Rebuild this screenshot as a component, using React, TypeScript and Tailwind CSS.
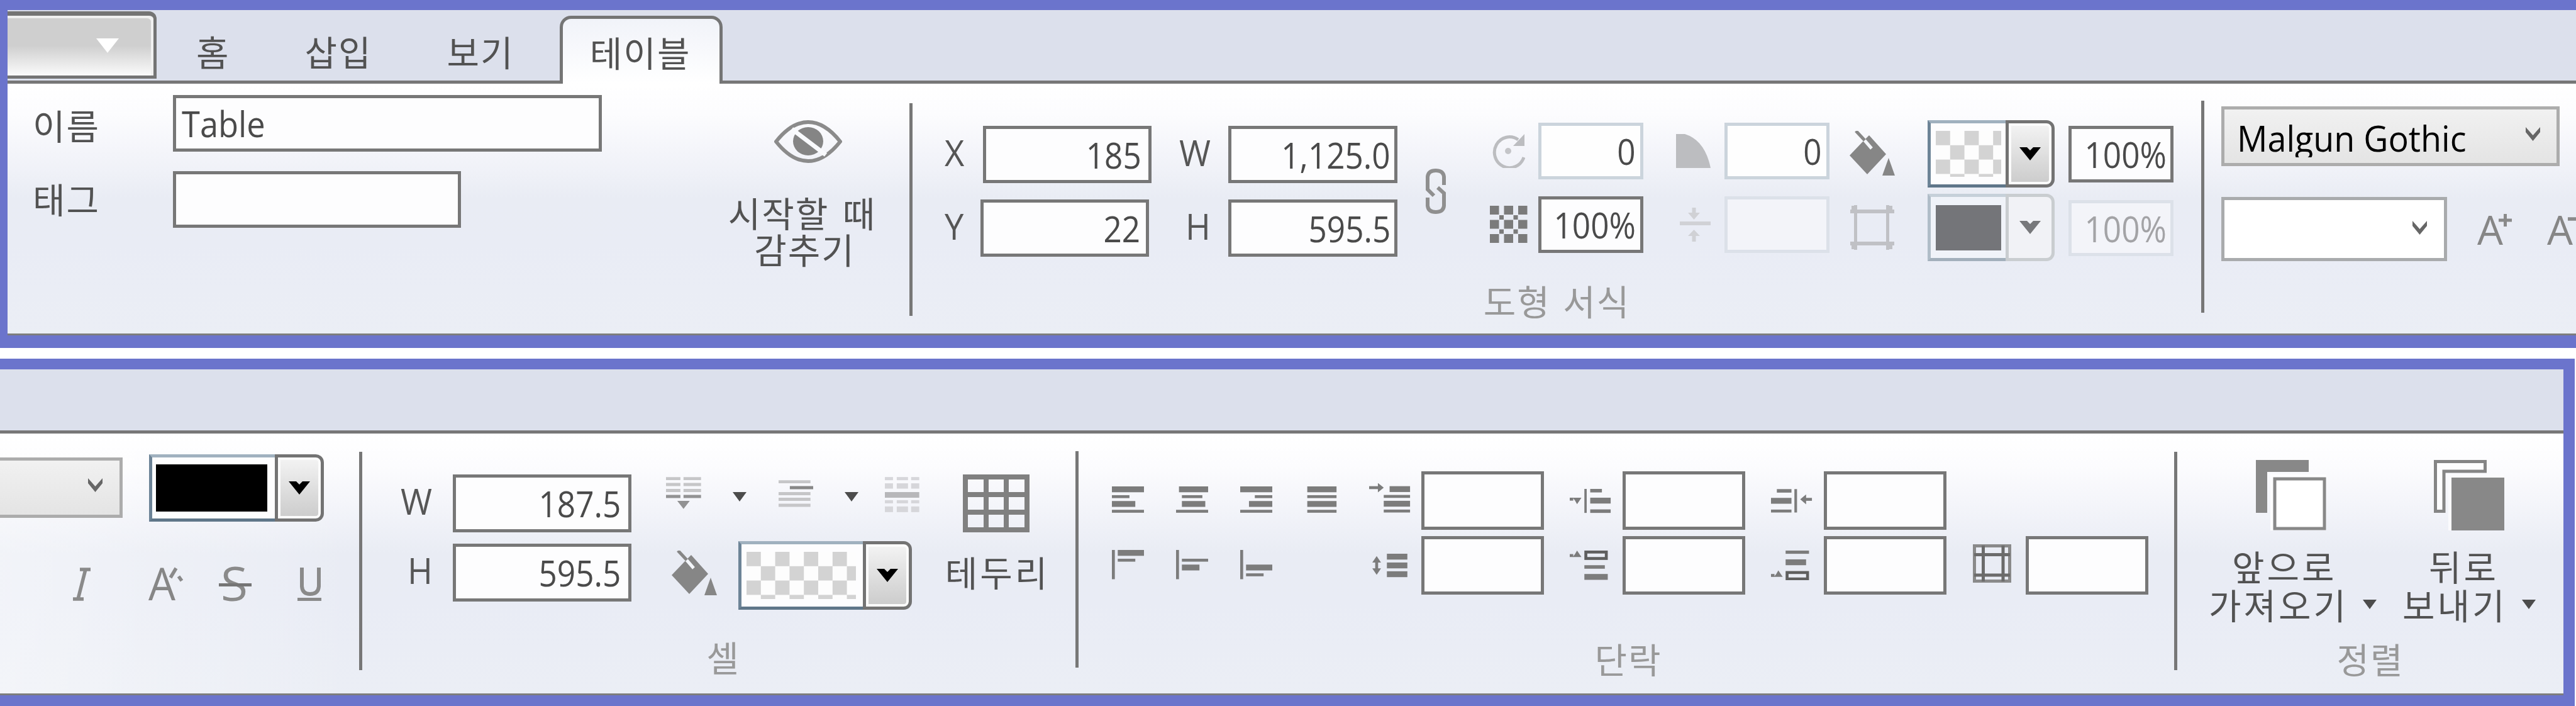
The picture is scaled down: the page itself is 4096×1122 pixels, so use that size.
import type { ReactNode } from "react";

type Rect = [number, number, number, number];

const KR = "font-['Noto_Sans_CJK_KR',sans-serif] text-[56px] leading-[58px] tracking-[2px] whitespace-nowrap";
const LATIN = "font-['Open_Sans',sans-serif] text-[57px] leading-[80px] whitespace-nowrap inline-block";

/* Pixel-grid icon: every unit is one cell of the original 16px artwork. */
function Grid({
  w,
  h,
  rects,
  fill = "#7c7c7c",
  children,
  className = "",
}: {
  w: number;
  h: number;
  rects: Rect[];
  fill?: string;
  children?: ReactNode;
  className?: string;
}) {
  return (
    <svg width={w * 4.65} height={h * 4.65} viewBox={`0 0 ${w} ${h}`} fill={fill} className={`shrink-0 ${className}`}>
      {rects.map((r, i) => (
        <rect key={i} x={r[0]} y={r[1]} width={r[2]} height={r[3]} />
      ))}
      {children}
    </svg>
  );
}

function Field({ className = "", tone = "normal", children }: { className?: string; tone?: "normal" | "soft" | "off"; children?: ReactNode }) {
  const tones = {
    normal: "border-[#777777] bg-[#fdfdfe] text-[#4a4a4a]",
    soft: "border-[#cbd4dc] bg-[#fefefe] text-[#4a4a4a]",
    off: "border-[#dce1e9] bg-[#f3f4f9] text-[#a3a3a6]",
  };
  return (
    <div className={`flex shrink-0 items-center justify-end border-[5px] ${tones[tone]} ${className}`}>
      {children !== undefined && <span className={`${LATIN} origin-right scale-x-[0.9]`}>{children}</span>}
    </div>
  );
}

function Label({ className = "", children }: { className?: string; children: ReactNode }) {
  return (
    <div className={`shrink-0 text-[#565656] ${className}`}>
      <span className={`${LATIN} origin-left -translate-y-[4px] scale-x-[0.95]`}>{children}</span>
    </div>
  );
}

function Divider({ className = "" }: { className?: string }) {
  return <div className={`w-[5px] shrink-0 bg-[#777777] ${className}`} />;
}

function Chevron({ className = "" }: { className?: string }) {
  return (
    <svg width="25" height="22" viewBox="0 0 25 22" className={`shrink-0 ${className}`}>
      <path d="M1 0 L12.5 13 L24 0 L24 8 L12.5 22 L1 8 Z" fill="#666666" />
    </svg>
  );
}

function Caret({ className = "" }: { className?: string }) {
  return (
    <svg width="22" height="15" viewBox="0 0 22 15" className={`shrink-0 ${className}`}>
      <path d="M0 0 H22 L11 15 Z" fill="#4c4c4c" />
    </svg>
  );
}

function Checker({ w, h, id }: { w: number; h: number; id: string }) {
  return (
    <svg width={w} height={h} className="shrink-0">
      <defs>
        <pattern id={id} width="45.6" height="45.6" patternUnits="userSpaceOnUse">
          <rect width="45.6" height="45.6" fill="#fdfdfd" />
          <rect width="22.8" height="22.8" fill="#d3d3d3" />
          <rect x="22.8" y="22.8" width="22.8" height="22.8" fill="#d3d3d3" />
        </pattern>
      </defs>
      <rect width={w} height={h} fill={`url(#${id})`} />
    </svg>
  );
}

function Picker({ className = "", off = false, children }: { className?: string; off?: boolean; children: ReactNode }) {
  return (
    <div className={`flex shrink-0 ${className}`}>
      <div
        className={`flex flex-1 items-center border-y-[5px] border-l-[5px] pl-[8px] ${
          off
            ? "border-t-[#c6d0d9] border-b-[#a3b0bc] border-l-[#b0bdc8] bg-[#f0f3f9]"
            : "border-t-[#a0b1bf] border-b-[#5f7689] border-l-[#6d8497] bg-[#fdfdfe]"
        }`}
      >
        {children}
      </div>
      <div
        className={`flex w-[78px] shrink-0 items-center justify-center rounded-r-[13px] border-[5px] ${
          off ? "border-[#c9cdd0] bg-[#f1f2f6]" : "border-[#737373] bg-gradient-to-b from-[#f4f4f4] to-[#cbcbcb] shadow-[inset_0_0_0_4px_#fbfbfb]"
        }`}
      >
        <svg width="34" height="21" viewBox="0 0 34 21">
          <path d="M0 0 H12 L17 5 L22 0 H34 L17 21 Z" fill={off ? "#77787b" : "#000000"} />
        </svg>
      </div>
    </div>
  );
}

function Bucket({ className = "" }: { className?: string }) {
  return (
    <svg width="74" height="72" viewBox="0 0 74 72" className={`shrink-0 ${className}`}>
      <path d="M32 7 L59 37 L29 69 L1 39 L22 17 Z" fill="#868686" />
      <path d="M23 13 L36 28" stroke="#f4f6fa" strokeWidth="5" />
      <path d="M11 0 L25 15" stroke="#868686" strokeWidth="5" />
      <path d="M63 43 L73 71 H53 Z" fill="#868686" />
    </svg>
  );
}

function Caption({ className = "", children }: { className?: string; children: ReactNode }) {
  return <div className={`${KR} text-center text-[#999999] ${className}`}>{children}</div>;
}

const BODY =
  "flex flex-1 items-start overflow-hidden border-b-[3px] border-[#7d7d7d] bg-[linear-gradient(to_bottom,#ffffff_0%,#fcfcfe_12%,#f4f5fa_27%,#e9ecf4_46%,#e9ecf5_65%,#ebeef5_100%)]";

const LINES: Rect[][] = [
  [[0, 0, 11, 2], [0, 3, 6, 1], [0, 5, 8, 2], [0, 8, 11, 1]],
  [[1, 0, 10, 2], [2, 3, 7, 1], [2, 5, 8, 2], [0, 8, 11, 1]],
  [[0, 0, 11, 2], [5, 3, 6, 1], [3, 5, 8, 2], [0, 8, 11, 1]],
  [[1, 0, 10, 2], [1, 3, 10, 1], [1, 5, 10, 2], [1, 8, 10, 1]],
];

const VERTICALS: Rect[][] = [
  [[0, 0, 1, 10], [2, 0, 9, 2], [2, 3, 6, 1]],
  [[0, 0, 1, 10], [2, 3, 9, 1], [2, 5, 6, 2]],
  [[0, 0, 1, 10], [2, 5, 9, 2], [2, 8, 6, 1]],
];

function TopRibbon() {
  return (
    <section className="flex h-[553px] flex-col border-t-[16px] border-b-[20px] border-l-[12px] border-[#6b74cc]">
      <nav className={`flex h-[112px] items-stretch bg-[#dce0ec] text-[#525252] ${KR}`}>
        <div className="mt-[2px] flex h-[107px] w-[237px] items-center justify-end rounded-tr-[12px] border-t-[7px] border-r-[5px] border-b-[5px] border-[#747474] bg-gradient-to-b from-[#cfcfcf] from-50% to-[#fbfbfb] pr-[55px] shadow-[inset_-4px_4px_0_#f0f0f0]">
          <svg width="36" height="23" viewBox="0 0 36 23">
            <path d="M0 0 H36 L18 23 Z" fill="#ffffff" />
          </svg>
        </div>
        <div className="ml-[63px] pt-[36px]">홈</div>
        <div className="ml-[119px] pt-[36px]">삽입</div>
        <div className="ml-[119px] pt-[36px]">보기</div>
        <div className="relative z-10 mt-[9px] -mb-[5px] ml-[72px] w-[259px] rounded-t-[18px] border-x-[5px] border-t-[5px] border-[#757575] bg-gradient-to-b from-[#f1f3f9] to-white pt-[23px] pr-[2px] text-center">
          테이블
        </div>
      </nav>
      <div className="h-[5px] shrink-0 bg-[#777777]" />
      <div className={BODY}>
        <div className="mt-[18px] flex w-[945px] shrink-0 flex-col gap-[31px] text-[#525252]">
          <div className="flex items-center">
            <span className={`${KR} w-[263px] pt-[4px] pl-[40px]`}>이름</span>
            <div className="flex h-[90px] w-[682px] items-center border-[5px] border-[#777777] bg-[#fdfdfe] pl-[9px] text-[#4a4a4a]">
              <span className={`${LATIN} origin-left scale-x-[0.92]`}>Table</span>
            </div>
          </div>
          <div className="flex items-center">
            <span className={`${KR} w-[263px] pb-[5px] pl-[40px]`}>태그</span>
            <Field className="h-[90px] w-[458px]" />
          </div>
        </div>
        <div className="mt-[58px] ml-[197px] flex w-[243px] shrink-0 flex-col items-center text-[#525252]">
          <svg width="108" height="68" viewBox="0 0 108 68" className="ml-[18px]">
            <path d="M3 34 C22 10 40 3 54 3 C68 3 86 10 105 34 C86 58 68 65 54 65 C40 65 22 58 3 34 Z" fill="none" stroke="#8b8b8b" strokeWidth="6" />
            <ellipse cx="54" cy="33.5" rx="24" ry="22.5" fill="#858585" />
            <path d="M28 14 L82 55" stroke="#f9fafd" strokeWidth="7" />
          </svg>
          <div className={`${KR} mt-[49px] [word-spacing:7px]`}>시작할 때</div>
          <div className={`${KR} ml-[8px]`}>감추기</div>
        </div>
        <Divider className="mt-[31px] ml-[49px] h-[338px]" />

        <div className="flex w-[2049px] shrink-0 flex-col">
          <div className="flex h-[315px] items-start">
            <div className="mt-[67px] ml-[51px] flex w-[330px] flex-col gap-[26px]">
              <div className="flex items-center">
                <Label className="w-[61px]">X</Label>
                <Field className="h-[91px] w-[268px] pr-[11px]">185</Field>
              </div>
              <div className="flex items-center">
                <Label className="w-[57px]">Y</Label>
                <Field className="h-[91px] w-[268px] pr-[9px]">22</Field>
              </div>
            </div>
            <div className="mt-[67px] ml-[43px] flex w-[347px] flex-col gap-[26px]">
              <div className="flex items-center">
                <Label className="w-[78px]">W</Label>
                <Field className="h-[91px] w-[269px] pr-[6px]">1,125.0</Field>
              </div>
              <div className="flex items-center">
                <Label className="w-[78px] pl-[10px]">H</Label>
                <Field className="h-[91px] w-[269px] pr-[6px]">595.5</Field>
              </div>
            </div>
            <svg width="34" height="74" viewBox="0 0 34 74" fill="none" stroke="#8f8f8f" strokeWidth="6" className="mt-[134px] ml-[44px] shrink-0">
              <path d="M30 27 V14 Q29 4 17 4 Q5 4 4 14 V34 L14 44" />
              <path d="M4 47 V60 Q5 70 17 70 Q29 70 30 60 V40 L20 31" />
            </svg>

            <div className="mt-[62px] ml-[69px] flex flex-col gap-[27px]">
              <div className="flex items-center">
                <svg width="56" height="54" viewBox="0 0 56 54" className="mr-[21px]">
                  <path d="M45 9 A24 24.5 0 1 0 54 37" fill="none" stroke="#bcbdc0" strokeWidth="5" />
                  <path d="M55 0 V19 H37 Z" fill="#bcbdc0" />
                  <circle cx="29" cy="27" r="5" fill="#c4c5c8" />
                </svg>
                <Field tone="soft" className="h-[90px] w-[167px] pr-[7px]">0</Field>
              </div>
              <div className="flex items-center">
                <svg width="60" height="60" viewBox="0 0 60 60" fill="#7b7b7b" className="mr-[17px]">
                  {[0, 22.5, 45].map((y) => [0, 22.5, 45].map((x) => <rect key={`${x}-${y}`} x={x} y={y} width="14.5" height="14" />))}
                  {[15, 37.5].map((y) => [15, 37.5].map((x) => <rect key={`${x}-${y}`} x={x} y={y} width="7" height="7" />))}
                </svg>
                <Field className="h-[90px] w-[167px] pr-[7px]">100%</Field>
              </div>
            </div>

            <div className="mt-[62px] ml-[52px] flex flex-col gap-[27px]">
              <div className="flex items-center">
                <svg width="55" height="54" viewBox="0 0 55 54" className="mr-[22px]">
                  <path d="M0 0 H14 Q46 10 55 54 H0 Z" fill="#bcbdc0" />
                </svg>
                <Field tone="soft" className="h-[90px] w-[167px] pr-[7px]">0</Field>
              </div>
              <div className="flex items-center">
                <svg width="49" height="54" viewBox="0 0 49 54" fill="#d0d1d5" className="mr-[22px] ml-[6px]">
                  <rect y="22" width="49" height="6" />
                  <path d="M19.500 0 H25.500 V8 H32 L22.500 19 L13 8 H19.500 Z" />
                  <path d="M19.500 54 H25.500 V45 H32 L22.500 35 L13 45 H19.500 Z" />
                </svg>
                <Field tone="off" className="h-[90px] w-[167px]" />
              </div>
            </div>

            <div className="mt-[75px] ml-[31px] flex w-[125px] flex-col gap-[46px]">
              <Bucket />
              <svg width="70" height="71" viewBox="0 0 70 71" fill="#c0c1c5" className="ml-[2px]">
                <rect y="7" width="70" height="6" />
                <rect y="58" width="70" height="6" />
                <rect x="6" width="5" height="71" />
                <rect x="57" width="5" height="71" />
                <rect x="2" y="1" width="9" height="12" />
                <rect x="57" y="1" width="10" height="12" />
                <rect x="2" y="58" width="9" height="12" />
                <rect x="57" y="58" width="10" height="12" />
              </svg>
            </div>
            <div className="mt-[58px] flex flex-col gap-[10px]">
              <Picker className="h-[107px] w-[202px]">
                <Checker w={104} h={73} id="fill-checker" />
              </Picker>
              <Picker off className="h-[107px] w-[202px]">
                <div className="h-[72px] w-[104px] bg-[#747579]" />
              </Picker>
            </div>
            <div className="mt-[67px] ml-[22px] flex flex-col gap-[28px]">
              <Field className="h-[90px] w-[167px] pr-[6px]">100%</Field>
              <Field tone="off" className="h-[89px] w-[167px] pr-[6px]">100%</Field>
            </div>
          </div>
          <Caption className="[word-spacing:5px]">도형 서식</Caption>
        </div>

        <Divider className="mt-[27px] h-[337px]" />
        <div className="mt-[36px] ml-[27px] flex shrink-0 flex-col gap-[49px]">
          <div className="flex h-[95px] w-[538px] items-start border-[5px] border-[#acacac] bg-gradient-to-b from-[#f1f1f1] to-[#e4e4e4]">
            <div className="ml-[20px] h-[85px] w-[390px] text-black">
              <span className={`${LATIN} mt-[5px] origin-left scale-x-[0.945] [clip-path:inset(0_0_9px_0)]`}>Malgun Gothic</span>
            </div>
            <Chevron className="mt-[28px] ml-[68px]" />
          </div>
          <div className="flex items-start">
            <div className="flex h-[102px] w-[359px] items-start justify-end border-[5px] border-[#a9abad] bg-white pr-[26px]">
              <Chevron className="mt-[33px]" />
            </div>
            <svg width="56" height="52" viewBox="0 0 56 52" className="mt-[26px] ml-[48px] overflow-visible">
              <text x="0" y="50" fontFamily="Open Sans" fontSize="64" fill="#868686" textLength="41" lengthAdjust="spacingAndGlyphs">A</text>
              <path d="M34 11 H55 M44.500 1 V21" stroke="#8a8a8a" strokeWidth="5" />
            </svg>
            <svg width="56" height="52" viewBox="0 0 56 52" className="mt-[26px] ml-[55px] overflow-visible">
              <text x="0" y="50" fontFamily="Open Sans" fontSize="64" fill="#868686" textLength="41" lengthAdjust="spacingAndGlyphs">A</text>
              <path d="M33 9 H55" stroke="#8a8a8a" strokeWidth="5.500" />
            </svg>
          </div>
        </div>
      </div>
    </section>
  );
}

function BottomRibbon() {
  const box = "h-[93px] w-[195px]";
  return (
    <section className="mt-[17px] mr-[2px] flex h-[552px] flex-col border-t-[17px] border-r-[18px] border-b-[17px] border-[#6b74cc]">
      <div className="h-[97px] shrink-0 bg-[#dce0ec]" />
      <div className="h-[5px] shrink-0 bg-[#777777]" />
      <div className={BODY}>
        <div className="flex w-[571px] shrink-0 flex-col self-stretch bg-gradient-to-r from-white/40 to-transparent">
          <div className="flex items-start pt-[33px]">
            <div className="mt-[5px] flex h-[96px] w-[195px] items-start justify-end border-y-[5px] border-r-[5px] border-[#acacac] bg-gradient-to-b from-[#f1f1f1] to-[#e4e4e4] pr-[26px]">
              <Chevron className="mt-[28px]" />
            </div>
            <Picker className="ml-[42px] h-[107px] w-[278px]">
              <div className="-ml-[2px] h-[75px] w-[177px] bg-black" />
            </Picker>
          </div>
          <div className="mt-[67px] flex items-start pl-[114px]">
            <svg width="34" height="64" viewBox="0 0 34 64" className="overflow-visible">
              <path d="M13 9 H30 M2 56 H19 M22 9 L10 56" stroke="#8a8a8a" strokeWidth="5.500" fill="none" />
            </svg>
            <svg width="56" height="64" viewBox="0 0 56 64" className="ml-[88px] overflow-visible">
              <text x="0" y="58" fontFamily="Open Sans" fontSize="71" fill="#868686" textLength="43" lengthAdjust="spacingAndGlyphs">A</text>
              <path d="M35 22 L44 7 M48 20 L53 27" stroke="#8a8a8a" strokeWidth="5.500" />
            </svg>
            <svg width="52" height="64" viewBox="0 0 52 64" className="ml-[56px] overflow-visible">
              <text x="3" y="59" fontFamily="Open Sans" fontSize="75" fill="#8a8a8a" textLength="43" lengthAdjust="spacingAndGlyphs">S</text>
              <rect y="31" width="52" height="5" fill="#757575" />
            </svg>
            <svg width="40" height="64" viewBox="0 0 40 64" className="ml-[73px] overflow-visible">
              <path d="M7 6 V36 Q8 48 20 48 Q33 48 34 36 V6" fill="none" stroke="#8a8a8a" strokeWidth="6" />
              <rect y="54" width="38" height="5" fill="#8a8a8a" />
            </svg>
          </div>
        </div>
        <Divider className="mt-[29px] h-[347px]" />

        <div className="flex w-[1134px] shrink-0 flex-col">
          <div className="flex h-[325px] items-start">
            <div className="mt-[65px] ml-[61px] flex w-[367px] flex-col gap-[18px]">
              <div className="flex items-center">
                <Label className="w-[83px]">W</Label>
                <Field className="h-[92px] w-[284px] pr-[12px]">187.5</Field>
              </div>
              <div className="flex items-center">
                <Label className="w-[83px] pl-[11px]">H</Label>
                <Field className="h-[92px] w-[284px] pr-[12px]">595.5</Field>
              </div>
            </div>
            <div className="mt-[69px] ml-[55px] flex w-[403px] flex-col">
              <div className="flex items-start">
                <svg width="56" height="51" viewBox="0 0 56 51" fill="#c6c6c8">
                  <path d="M0 0 H23 V5 H0 Z M28 0 H56 V5 H28 Z M0 9.500 H23 V14.500 H0 Z M28 9.500 H56 V14.500 H28 Z M0 19 H23 V24 H0 Z M28 19 H56 V24 H28 Z" />
                  <path d="M0 28.500 H23 V33.500 H0 Z M28 28.500 H56 V33.500 H28 Z M18 38 H38 L28 51 Z" fill="#929293" />
                </svg>
                <Caret className="mt-[24px] ml-[50px]" />
                <svg width="56" height="44" viewBox="0 0 56 44" fill="#c6c6c8" className="mt-[5px] ml-[51px]">
                  <path d="M0 0 H51 V5 H0 Z M0 19 H51 V24 H0 Z M0 28 H51 V33 H0 Z M0 37.500 H51 V42.500 H0 Z" />
                  <path d="M18 9.500 H56 V14.500 H18 Z" fill="#878787" />
                </svg>
                <Caret className="mt-[24px] ml-[50px]" />
                <svg width="55" height="57" viewBox="0 0 55 57" fill="#d6d6da" className="ml-[42px]">
                  {[0, 19, 42].map((x, i) => (
                    <g key={x}>
                      <rect x={x} y="0" width={i === 1 ? 18 : 13} height="5" />
                      <rect x={x} y="10" width={i === 1 ? 18 : 13} height="8.500" />
                      <rect x={x} y="37" width={i === 1 ? 18 : 13} height="5" />
                      <rect x={x} y="47" width={i === 1 ? 18 : 13} height="9" />
                    </g>
                  ))}
                  <rect y="24" width="55" height="9" fill="#b7b7ba" />
                </svg>
              </div>
              <div className="mt-[45px] flex items-start pl-[8px]">
                <Bucket className="mt-[15px]" />
                <Picker className="ml-[33px] h-[109px] w-[276px]">
                  <Checker w={174} h={75} id="cell-checker" />
                </Picker>
              </div>
            </div>
            <div className="mt-[65px] ml-[22px] flex w-[200px] flex-col items-center">
              <svg width="106" height="92" viewBox="0 0 106 92" fill="none" stroke="#808080" strokeWidth="8">
                <path d="M4 4 H102 V88 H4 Z M37 4 V88 M69 4 V88 M4 32 H102 M4 60 H102" />
              </svg>
              <div className={`${KR} mt-[33px] ml-[4px] tracking-[4px] text-[#525252]`}>테두리</div>
            </div>
          </div>
          <Caption className="pl-[14px]">셀</Caption>
        </div>

        <Divider className="mt-[28px] h-[344px]" />
        <div className="flex w-[1742px] shrink-0 flex-col">
          <div className="flex h-[328px] items-start">
            <div className="mt-[84px] ml-[53px] flex w-[358px] flex-col gap-[57px]">
              <div className="flex gap-[51px]">
                {LINES.map((r, i) => (
                  <Grid key={i} w={11} h={9.5} rects={r} />
                ))}
              </div>
              <div className="flex gap-[51px]">
                {VERTICALS.map((r, i) => (
                  <Grid key={i} w={11} h={10} rects={r} />
                ))}
              </div>
            </div>

            <div className="mt-[60px] ml-[51px] flex flex-col gap-[10px]">
              <div className="flex items-start">
                <Grid w={14.2} h={11} rects={[[7, 1, 7, 2], [5, 4, 9, 1], [5, 6, 9, 2], [5, 9, 9, 1], [0, 1, 3.5, 1]]} className="mt-[19px] mr-[17px]">
                  <path d="M3 -0.100 L5 1.500 L3 3.100 Z" />
                </Grid>
                <Field className={box} />
              </div>
              <div className="flex items-start">
                <Grid w={13} h={9} rects={[[5, 0, 7, 2], [5, 3, 7, 2], [5, 6, 7, 2], [1, 2, 1, 4]]} className="mt-[28px] mr-[18px] ml-[5px]">
                  <path d="M0 3 L1.500 0.800 L3 3 Z M0 5 L1.500 7.200 L3 5 Z" />
                </Grid>
                <Field className={box} />
              </div>
            </div>

            <div className="mt-[60px] ml-[41px] flex flex-col gap-[10px]">
              <div className="flex items-start">
                <Grid w={14.2} h={9} rects={[[5, 0, 0.8, 8.2], [7, 0, 4, 1.2], [7, 3, 7, 2], [7, 7, 7, 1.2], [0, 3, 1.2, 1]]} className="mt-[28px] mr-[18px]">
                  <path d="M1 3 H4 L2.500 5.200 L1.800 4 Z" />
                </Grid>
                <Field className={box} />
              </div>
              <div className="flex items-start">
                <Grid w={14.2} h={10.2} rects={[[5, 5, 7, 1.2], [5, 8, 8, 2], [0, 1.2, 1.2, 1]]} className="mt-[23px] mr-[18px]">
                  <rect x="5.500" y="0.500" width="7" height="2.200" fill="none" stroke="#5f5f5f" />
                  <path d="M1 2.200 H4 L2.500 0 L1.800 1.200 Z" />
                </Grid>
                <Field className={box} />
              </div>
            </div>

            <div className="mt-[60px] ml-[41px] flex flex-col gap-[10px]">
              <div className="flex items-start">
                <Grid w={14.2} h={10} rects={[[2, 2, 5, 1.2], [0, 5, 7, 2], [0, 9, 7, 1], [8, 2, 0.9, 8], [11.5, 5, 2.5, 1]]} className="mt-[19px] mr-[18px]">
                  <path d="M10 5.500 L12 3.800 V7.200 Z" />
                </Grid>
                <Field className={box} />
              </div>
              <div className="flex items-start">
                <Grid w={14.2} h={10.2} rects={[[5, 0, 8, 1.1], [5, 3, 7, 2], [0, 8, 1.2, 1]]} className="mt-[23px] mr-[18px]">
                  <rect x="5.500" y="7.500" width="7" height="2.200" fill="none" stroke="#5f5f5f" />
                  <path d="M1 9 H4 L2.500 6.800 L1.800 8 Z" />
                </Grid>
                <Field className={box} />
              </div>
            </div>

            <div className="mt-[163px] ml-[42px] flex items-start">
              <svg width="61" height="61" viewBox="0 0 61 61" fill="none" className="mt-[13px] mr-[23px]">
                <path d="M2.500 2.500 H58.500 V58.500 H2.500 Z" stroke="#8a8a8a" strokeWidth="5" />
                <path d="M16.500 2 V59 M48 2 V59 M2 16.500 H59 M2 49 H59" stroke="#6b6b6b" strokeWidth="5" />
              </svg>
              <Field className={box} />
            </div>
          </div>
          <Caption className="pl-[6px]">단락</Caption>
        </div>

        <Divider className="mt-[29px] h-[347px]" />
        <div className="flex w-[614px] shrink-0 flex-col text-[#525252]">
          <div className="flex h-[328px] items-start">
            <div className="mt-[42px] ml-[50px] w-[267px]">
              <svg width="112" height="112" viewBox="0 0 112 112" className="ml-[75px]">
                <path d="M0 0 H84 V19 H18 V84 H0 Z" fill="#888888" />
                <rect x="23" y="23" width="89" height="89" fill="#fdfdfe" />
                <rect x="30" y="30" width="79" height="79" fill="#ffffff" stroke="#888888" strokeWidth="5" />
              </svg>
              <div className={`${KR} mt-[27px] ml-[37px] tracking-[4px]`}>앞으로</div>
              <div className={`${KR} flex items-center gap-[23px] pt-[3px] tracking-[4px]`}>
                가져오기
                <Caret className="mt-[1px]" />
              </div>
            </div>
            <div className="mt-[42px] ml-[41px] w-[240px]">
              <svg width="112" height="112" viewBox="0 0 112 112" className="ml-[50px]">
                <path d="M2.500 2.500 H81.500 V18 H16 V81.500 H2.500 Z" fill="#fdfdfe" stroke="#858585" strokeWidth="5" />
                <rect x="23" y="23" width="89" height="89" fill="#fbfbfd" />
                <rect x="28" y="28" width="84" height="84" fill="#888888" />
              </svg>
              <div className={`${KR} mt-[27px] ml-[42px] tracking-[4px]`}>뒤로</div>
              <div className={`${KR} flex items-center gap-[23px] pt-[3px] tracking-[4px]`}>
                보내기
                <Caret className="mt-[1px]" />
              </div>
            </div>
          </div>
          <Caption>정렬</Caption>
        </div>
      </div>
    </section>
  );
}

export default function App() {
  return (
    <main className="h-[1122px] w-[4096px] overflow-hidden bg-white">
      <TopRibbon />
      <BottomRibbon />
    </main>
  );
}
